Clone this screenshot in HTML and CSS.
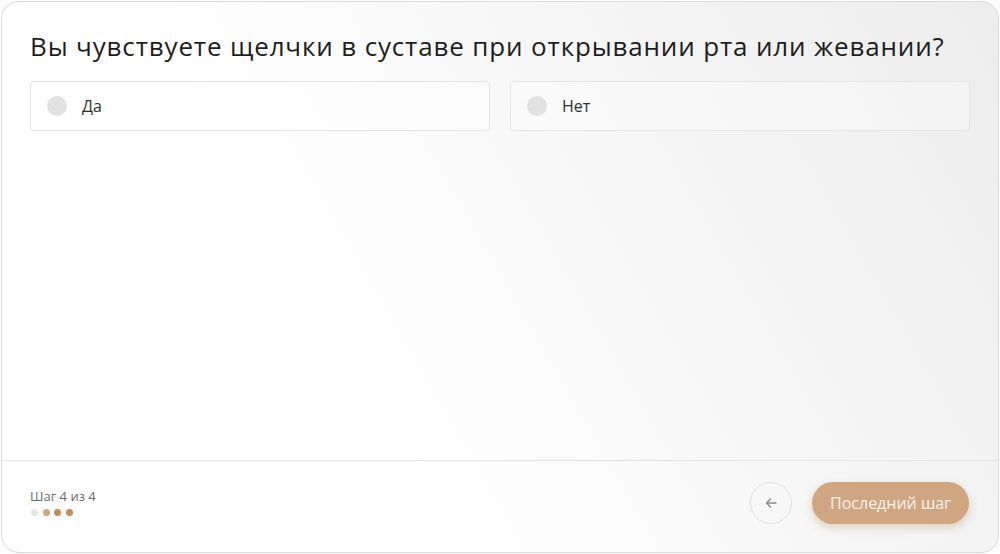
FILE: index.html
```html
<!DOCTYPE html>
<html lang="ru">
<head>
<meta charset="utf-8">
<title>Опрос</title>
<link rel="stylesheet" href="styles.css">
</head>
<body>
<div class="card">
  <main class="content">
    <h1 class="question">Вы чувствуете щелчки в суставе при открывании рта или жевании?</h1>
    <div class="options">
      <label class="option"><span class="radio"></span><span class="option-label">Да</span></label>
      <label class="option"><span class="radio"></span><span class="option-label">Нет</span></label>
    </div>
  </main>
  <footer class="footer">
    <div class="progress">
      <div class="step">Шаг 4 из 4</div>
      <div class="dots">
        <span class="dot dot-light"></span>
        <span class="dot dot-mid"></span>
        <span class="dot"></span>
        <span class="dot"></span>
      </div>
    </div>
    <div class="actions">
      <button class="back" type="button" aria-label="Назад">
        <svg width="14" height="14" viewBox="0 0 14 14" fill="none" stroke="#8a8a8a" stroke-width="1.4" stroke-linecap="round" stroke-linejoin="round"><path d="M12 7H2.5M6.5 3 2.5 7l4 4"/></svg>
      </button>
      <button class="primary" type="button">Последний шаг</button>
    </div>
  </footer>
</div>
</body>
</html>
```

FILE: styles.css
```css
* { box-sizing: border-box; }
html, body { margin: 0; padding: 0; background: #ffffff; }
body {
  width: 1000px;
  height: 554px;
  padding: 1px;
  font-family: "Open Sans", "Noto Sans", sans-serif;
}
.card {
  width: 998px;
  height: 552px;
  border: 1px solid #d9d9d9;
  border-radius: 18px;
  overflow: hidden;
  display: flex;
  flex-direction: column;
  background: linear-gradient(60deg, #ffffff 35%, #ececec 100%);
}
.content {
  flex: 1;
  padding: 27px 28px 0 28px;
}
.question {
  margin: 0;
  font-size: 26px;
  line-height: 34px;
  font-weight: 400;
  color: #1e1e1e;
  letter-spacing: 0.85px;
}
.options {
  margin-top: 18px;
  display: grid;
  grid-template-columns: 1fr 1fr;
  gap: 20px;
}
.option {
  height: 50px;
  border: 1px solid #e4e4e4;
  border-radius: 4px;
  background: rgba(255,255,255,0.35);
  display: flex;
  align-items: center;
  padding: 0 16px;
  gap: 15px;
}
.radio {
  width: 20px;
  height: 20px;
  border-radius: 50%;
  background: #e2e2e2;
  flex: none;
}
.option-label {
  font-size: 16px;
  color: #2e2e2e;
}
.footer {
  border-top: 1px solid #e4e4e4;
  height: 92px;
  padding: 20px 29px 28px 28px;
  display: flex;
  align-items: center;
  justify-content: space-between;
}
.progress {
  display: flex;
  flex-direction: column;
  gap: 4px;
  margin-top: -2px;
}
.step {
  font-size: 13px;
  line-height: 17px;
  color: #6a6a6a;
}
.dots {
  display: flex;
  gap: 4.5px;
  padding-left: 1px;
}
.dot {
  width: 7px;
  height: 7px;
  border-radius: 50%;
  background: #c68c57;
}
.dot-light { background: #ebe3dd; }
.dot-mid { background: #d1a57d; }
.actions {
  display: flex;
  align-items: center;
  gap: 20px;
}
.back {
  width: 42px;
  height: 42px;
  border-radius: 50%;
  border: 1px solid #e0e0e0;
  background: transparent;
  display: flex;
  align-items: center;
  justify-content: center;
  padding: 0;
}
.primary {
  height: 42px;
  width: 157px;
  border: none;
  border-radius: 21px;
  background: #d0a682;
  color: #fbf3ec;
  font-family: "Open Sans", "Noto Sans", sans-serif;
  font-size: 16px;
  box-shadow: 0 4px 10px rgba(190, 140, 95, 0.35);
  padding: 0;
}
```
